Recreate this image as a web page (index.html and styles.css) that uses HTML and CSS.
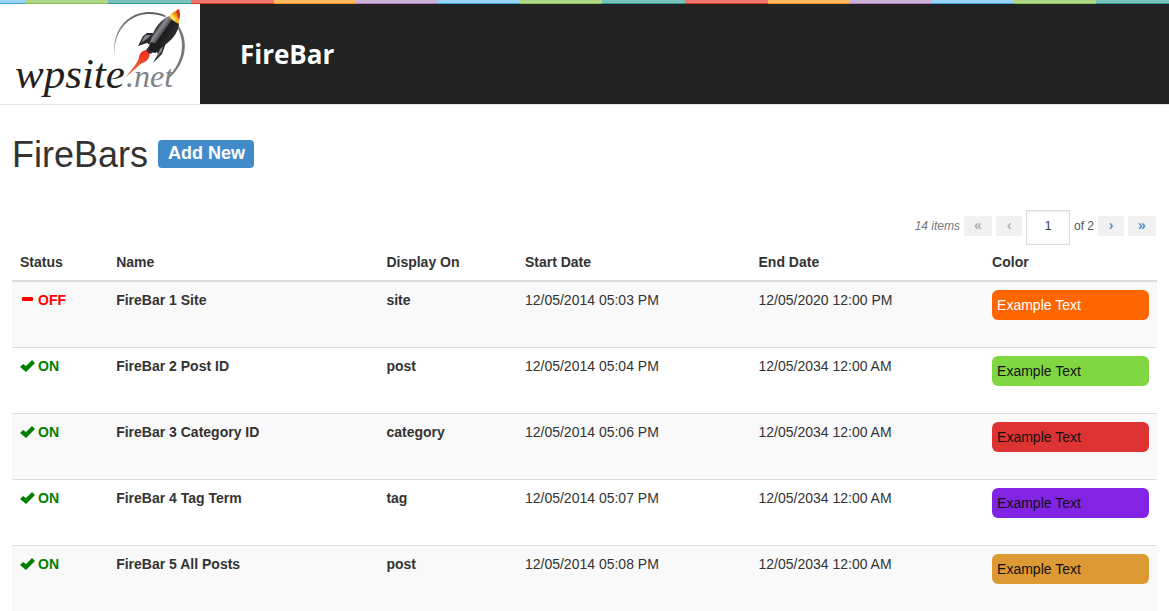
FILE: index.html
```html
<!DOCTYPE html>
<html lang="en">
<head>
<meta charset="utf-8">
<title>FireBar</title>
<meta name="viewport" content="width=device-width, initial-scale=1">
<link rel="stylesheet" href="styles.css">
</head>
<body>
<div class="stripes"></div>
<header class="banner">
  <div class="logo">
    <svg width="200" height="100" viewBox="0 4 200 100" role="img" aria-label="wpsite.net">
      <defs>
        <linearGradient id="ring" x1="0" y1="1" x2="1" y2="0">
          <stop offset="0" stop-color="#bbb"/><stop offset=".5" stop-color="#777"/><stop offset="1" stop-color="#555"/>
        </linearGradient>
        <linearGradient id="flame" x1="1" y1="0" x2="0" y2="1">
          <stop offset="0" stop-color="#e8201c"/><stop offset=".5" stop-color="#f0562c"/><stop offset="1" stop-color="#d9622c"/>
        </linearGradient>
        <linearGradient id="hull" gradientUnits="userSpaceOnUse" x1="157" y1="27" x2="171" y2="37">
          <stop offset="0" stop-color="#2a2a2c"/><stop offset=".2" stop-color="#8c8c90"/><stop offset=".42" stop-color="#55555a"/><stop offset=".5" stop-color="#1c1c1e"/><stop offset="1" stop-color="#2a2a2c"/>
        </linearGradient>
      </defs>
      <path d="M115 58C110 32 127 12 149 12C155 12 161 13 166 16L165 17C160 15 155 14 149 14C129 14 112 32 115 58Z" fill="url(#ring)"/>
      <path d="M177 24C189 38 188 62 169 78L168 77C185 60 185 40 176 25Z" fill="#777"/>
      <text class="word" x="15" y="88">wpsite</text>
      <text class="suffix" x="126" y="87">.net</text>
      <path d="M126 77C132 69 138 63 139 57C140 51 145 49 149 51C151 57 147 62 142 63C138 66 133 71 126 77Z" fill="url(#flame)"/>
      <path d="M142 55C145 52 149 54 147 58C144 59 142 58 142 55Z" fill="#ff3a20"/>
      <path d="M157 33L147 33L143 36L138 46L147 43L150 45L146 50L150 54L156 51L158 54L153 63L162 54L166 43L165 38L160 38Z" fill="#2b2b2e"/>
      <path d="M146 35L151 35L148 38L141 43L144 37ZM163 44L162 51L157 57L160 49Z" fill="#88888c"/>
      <path d="M148 49L152 36C155 27 162 19 169 16L179 23C179 31 173 39 166 44L155 53Z" fill="url(#hull)"/>
      <path d="M148 49L151 42L162 46L155 53Z" fill="#1e1e20"/>
      <path d="M169 17L172 13C175 14 178 17 179 20L179 24C175 22 172 20 169 17Z" fill="#f7b51c"/>
      <path d="M172 13L179 9L180 15L179 20C177 17 175 15 172 13Z" fill="#f18a1c"/>
      <path d="M176 11L179 9L180 15L179 20Z" fill="#cf2e23"/>
      <path d="M172 14L176 20L174 21L170 17Z" fill="#ffe16b"/>
    </svg>
  </div>
  <div class="product">FireBar</div>
</header>
<main class="content">
  <div class="heading">
    <h1>FireBars</h1>
    <a class="add" href="#">Add New</a>
  </div>
  <nav class="pager" aria-label="Pagination">
    <span class="count">14 items</span>
    <a class="step first off" href="#">«</a>
    <a class="step off" href="#">‹</a>
    <input class="page" type="text" value="1" aria-label="Current page">
    <span class="total">of 2</span>
    <a class="step" href="#">›</a>
    <a class="step last" href="#">»</a>
  </nav>
  <table class="bars">
    <colgroup><col class="c-status"><col class="c-name"><col class="c-display"><col class="c-date"><col class="c-date"><col class="c-color"></colgroup>
    <thead>
      <tr><th>Status</th><th>Name</th><th>Display On</th><th>Start Date</th><th>End Date</th><th>Color</th></tr>
    </thead>
    <tbody>
      <tr>
        <td><span class="status no"><svg width="14" height="14" viewBox="0 0 14 14"><path d="M3 4H12Q13 4 13 5V7Q13 8 12 8H3Q2 8 2 7V5Q2 4 3 4Z"/></svg>OFF</span></td>
        <td><b>FireBar 1 Site</b></td><td><b>site</b></td><td>12/05/2014 05:03 PM</td><td>12/05/2020 12:00 PM</td>
        <td><div class="sample orange">Example Text</div></td>
      </tr>
      <tr>
        <td><span class="status yes"><svg width="14" height="14" viewBox="0 0 14 14"><path d="M0 8L3 5L6 7L12 1L15 4L6 13Z"/></svg>ON</span></td>
        <td><b>FireBar 2 Post ID</b></td><td><b>post</b></td><td>12/05/2014 05:04 PM</td><td>12/05/2034 12:00 AM</td>
        <td><div class="sample green">Example Text</div></td>
      </tr>
      <tr>
        <td><span class="status yes"><svg width="14" height="14" viewBox="0 0 14 14"><path d="M0 8L3 5L6 7L12 1L15 4L6 13Z"/></svg>ON</span></td>
        <td><b>FireBar 3 Category ID</b></td><td><b>category</b></td><td>12/05/2014 05:06 PM</td><td>12/05/2034 12:00 AM</td>
        <td><div class="sample red">Example Text</div></td>
      </tr>
      <tr>
        <td><span class="status yes"><svg width="14" height="14" viewBox="0 0 14 14"><path d="M0 8L3 5L6 7L12 1L15 4L6 13Z"/></svg>ON</span></td>
        <td><b>FireBar 4 Tag Term</b></td><td><b>tag</b></td><td>12/05/2014 05:07 PM</td><td>12/05/2034 12:00 AM</td>
        <td><div class="sample purple">Example Text</div></td>
      </tr>
      <tr>
        <td><span class="status yes"><svg width="14" height="14" viewBox="0 0 14 14"><path d="M0 8L3 5L6 7L12 1L15 4L6 13Z"/></svg>ON</span></td>
        <td><b>FireBar 5 All Posts</b></td><td><b>post</b></td><td>12/05/2014 05:08 PM</td><td>12/05/2034 12:00 AM</td>
        <td><div class="sample amber">Example Text</div></td>
      </tr>
    </tbody>
  </table>
</main>
</body>
</html>
```
FILE: styles.css
```css
* { box-sizing: border-box; }
body {
  margin: 0;
  background: #fff;
  color: #333;
  font: 14px/20px "Liberation Sans", Arial, sans-serif;
}
a { text-decoration: none; }

.stripes {
  height: 4px;
  background:
    repeating-linear-gradient(90deg, #3fa9e0 0 82px, #8dc153 82px 164px, #2a9d94 164px 247px, #d9372c 247px 330px, #f7941d 330px 412px, #b07cc0 412px 494px) -56px 3px / 1976px 1px repeat-x,
    repeating-linear-gradient(90deg, #9ad5f5 0 82px, #b0d688 82px 164px, #7cc2bc 164px 247px, #ea7a70 247px 330px, #fdb960 330px 412px, #cdb2da 412px 494px) -56px 0 / 1976px 3px repeat-x;
}
.banner {
  display: flex;
  align-items: center;
  background: #222;
  border-bottom: 1px solid #e5e5e5;
}
.logo { background: #fff; }
.logo svg { display: block; }
.word, .suffix { font-family: "Liberation Serif", "Times New Roman", serif; font-style: italic; }
.word { font-size: 43px; fill: #231f20; }
.suffix { font-size: 32px; fill: #808285; }
.product {
  padding-left: 40px;
  color: #fff;
  font: bold 26px/36px "Open Sans", sans-serif;
}

.content { padding: 30px 12px 0; }
.heading { display: flex; align-items: flex-start; gap: 10px; }
h1 { margin: 0; font-size: 36px; font-weight: normal; line-height: 40px; }
.add {
  margin-top: 5px;
  padding: 3px 9px 5px 10px;
  border-radius: 4px;
  background: #428bca;
  color: #fff;
  font-size: 18px;
  font-weight: bold;
  line-height: 20px;
}

.pager {
  display: flex;
  align-items: flex-start;
  justify-content: flex-end;
  gap: 4px;
  margin: 35px 1px 0 0;
  font-size: 12px;
  color: #555;
}
.count, .total, .step { margin-top: 6px; }
.count { color: #777; font-style: italic; }
.step {
  width: 26px;
  height: 20px;
  background: #f1f1f1;
  color: #428bca;
  font: 600 14px/18px "Open Sans", sans-serif;
  text-align: center;
}
.first, .last { width: 28px; }
.off { color: #aaa; }
.page {
  width: 44px;
  height: 35px;
  padding: 0 0 3px;
  border: 1px solid #ddd;
  box-shadow: inset 0 1px 2px rgba(0, 0, 0, .07);
  color: #333;
  font: inherit;
  text-align: center;
}

.bars { width: 100%; margin-top: -1px; border-collapse: separate; border-spacing: 0; table-layout: fixed; }
.c-status { width: 8.4%; }
.c-name { width: 23.6%; }
.c-display { width: 12.1%; }
.c-date { width: 20.4%; }
.bars th { padding: 8px; border-bottom: 2px solid #ddd; text-align: left; }
.bars td { height: 66px; padding: 8px; border-bottom: 1px solid #ddd; vertical-align: top; }
.bars tbody tr:nth-child(odd) { background: #f9f9f9; }
.bars tbody tr:last-child td { height: 65px; border-bottom: 0; }
.status { display: flex; align-items: center; gap: 4px; font-weight: bold; }
.status svg { fill: currentColor; overflow: visible; }
.no { color: #f00; }
.yes { color: green; }
.sample { padding: 5px; border-radius: 6px; color: #111; }
.orange { background: #f60; color: #fff; }
.green { background: #81d742; }
.red { background: #d33; }
.purple { background: #8224e3; }
.amber { background: #d93; }
```
